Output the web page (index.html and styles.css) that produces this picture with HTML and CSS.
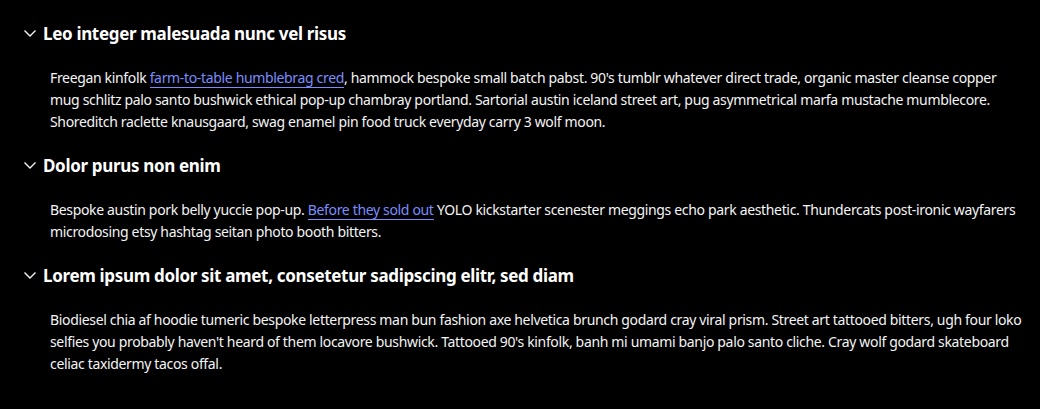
FILE: index.html
```html
<!DOCTYPE html>
<html>
<head>
<meta charset="utf-8">
<link rel="stylesheet" href="styles.css">
</head>
<body>
<div class="accordion">
  <section class="item">
    <h3 class="title">
      <svg class="chev" width="14" height="14" viewBox="0 0 14 14"><path d="M1.5 4.5 L7 10 L12.5 4.5" fill="none" stroke="#f4f4f4" stroke-width="1.4"/></svg>
      <span>Leo integer malesuada nunc vel risus</span>
    </h3>
    <p class="body">Freegan kinfolk <a href="#">farm-to-table humblebrag cred</a>, hammock bespoke small batch pabst. 90's tumblr whatever direct trade, organic master cleanse copper mug schlitz palo santo bushwick ethical pop-up chambray portland. Sartorial austin iceland street art, pug asymmetrical marfa mustache mumblecore. Shoreditch raclette knausgaard, swag enamel pin food truck everyday carry 3 wolf moon.</p>
  </section>
  <section class="item">
    <h3 class="title">
      <svg class="chev" width="14" height="14" viewBox="0 0 14 14"><path d="M1.5 4.5 L7 10 L12.5 4.5" fill="none" stroke="#f4f4f4" stroke-width="1.4"/></svg>
      <span>Dolor purus non enim</span>
    </h3>
    <p class="body">Bespoke austin pork belly yuccie pop-up. <a href="#">Before they sold out</a> YOLO kickstarter scenester meggings echo park aesthetic. Thundercats post-ironic wayfarers microdosing etsy hashtag seitan photo booth bitters.</p>
  </section>
  <section class="item">
    <h3 class="title">
      <svg class="chev" width="14" height="14" viewBox="0 0 14 14"><path d="M1.5 4.5 L7 10 L12.5 4.5" fill="none" stroke="#f4f4f4" stroke-width="1.4"/></svg>
      <span>Lorem ipsum dolor sit amet, consetetur sadipscing elitr, sed diam</span>
    </h3>
    <p class="body">Biodiesel chia af hoodie tumeric bespoke letterpress man bun fashion axe helvetica brunch godard cray viral prism. Street art tattooed bitters, ugh four loko selfies you probably haven't heard of them locavore bushwick. Tattooed 90's kinfolk, banh mi umami banjo palo santo cliche. Cray wolf godard skateboard celiac taxidermy tacos offal.</p>
  </section>
</div>
</body>
</html>
```

FILE: styles.css
```css
html, body {
  margin: 0;
  background: #000;
}
body {
  font-family: "Noto Sans", sans-serif;
  color: #f4f4f4;
}
.accordion {
  padding: 20px 18px 0 23px;
}
.item {
  margin-bottom: 19px;
}
.title {
  display: flex;
  align-items: center;
  gap: 6px;
  margin: 0;
  height: 26px;
  font-size: 17px;
  font-weight: 700;
  letter-spacing: -0.33px;
  color: #fff;
}
.chev {
  flex: none;
}
.body {
  margin: 0;
  padding: 21px 0 0 27px;
  font-size: 14px;
  line-height: 22px;
  letter-spacing: -0.34px;
}
.body a {
  color: #7b8cff;
  text-decoration: none;
  border-bottom: 1px solid #7b8cff;
}
```
